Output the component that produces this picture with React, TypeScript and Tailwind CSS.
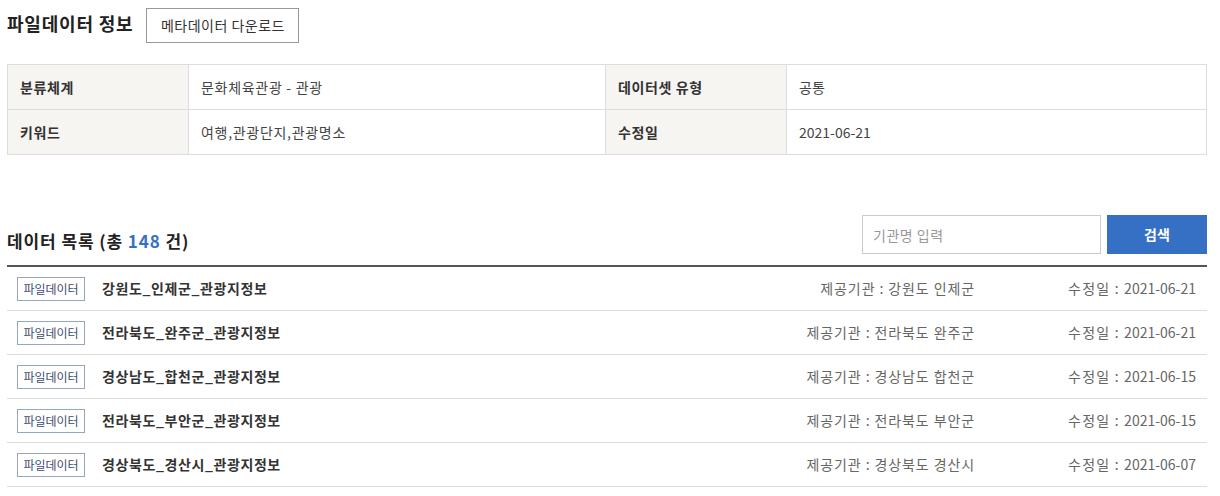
import { useState } from 'react';

const FONT = { fontFamily: '"Noto Sans CJK KR", "Noto Sans", sans-serif' };

const META = [
  [
    ['분류체계', '문화체육관광 - 관광'],
    ['데이터셋 유형', '공통'],
  ],
  [
    ['키워드', '여행,관광단지,관광명소'],
    ['수정일', '2021-06-21'],
  ],
];

const ROWS = [
  { title: '강원도_인제군_관광지정보', org: '강원도 인제군', date: '2021-06-21' },
  { title: '전라북도_완주군_관광지정보', org: '전라북도 완주군', date: '2021-06-21' },
  { title: '경상남도_합천군_관광지정보', org: '경상남도 합천군', date: '2021-06-15' },
  { title: '전라북도_부안군_관광지정보', org: '전라북도 부안군', date: '2021-06-15' },
  { title: '경상북도_경산시_관광지정보', org: '경상북도 경산시', date: '2021-06-07' },
];

export default function App() {
  const [query, setQuery] = useState('');

  return (
    <div className="w-[1220px] bg-white pl-[7px] pr-[13px] text-[#333]" style={FONT}>
      {/* file data info */}
      <div className="flex h-[50px] items-start pt-2">
        <h2 className="mt-[1px] text-[18px] font-bold leading-[28px] tracking-[0.8px] text-[#222]">파일데이터 정보</h2>
        <button className="ml-[13px] h-[35px] w-[153px] border border-[#999] bg-white text-[14px] tracking-[0.5px] text-[#333]">
          메타데이터 다운로드
        </button>
      </div>

      <div className="mt-[14px] border border-[#ddd] border-b-0">
        {META.map((row, i) => (
          <div key={i} className="flex h-[45px] border-b border-[#ddd] text-[14px]">
            {row.map(([label, value], j) => (
              <div key={label} className={j === 0 ? 'flex w-[598px]' : 'flex flex-1'}>
                <div className="flex w-[181px] items-center border-r border-[#ddd] bg-[#f6f5f1] pl-[12px] font-bold tracking-[0.6px] text-[#333]">
                  {label}
                </div>
                <div
                  className={
                    j === 0
                      ? 'flex flex-1 items-center border-r border-[#ddd] pl-[12px] tracking-[0.7px] text-[#444]'
                      : 'flex flex-1 items-center pl-[12px] text-[#444]'
                  }
                >
                  {value}
                </div>
              </div>
            ))}
          </div>
        ))}
      </div>

      {/* data list */}
      <div className="mt-[60px] flex items-end justify-between pb-[11px]">
        <h2 className="text-[17px] font-bold leading-[26px] tracking-[0.9px] text-[#222]">
          데이터 목록 (총 <span className="text-[#3570c0]">148</span> 건)
        </h2>
        <div className="flex gap-[6px]">
          <input
            value={query}
            onChange={(e) => setQuery(e.target.value)}
            placeholder="기관명 입력"
            className="h-[39px] w-[239px] border border-[#ccc] px-[10px] text-[14px] tracking-[0.5px] text-[#333] outline-none placeholder:text-[#999]"
          />
          <button className="h-[39px] w-[100px] bg-[#3670c5] text-[14px] font-bold text-white">검색</button>
        </div>
      </div>

      <div className="border-t-2 border-[#555]">
        {ROWS.map((r) => (
          <div key={r.title} className="flex h-[44px] items-center border-b border-[#ddd] pl-[10px] pr-[11px]">
            <span className="flex h-[24px] w-[68px] items-center justify-center border border-[#97a6c2] text-[12px] text-[#3e4d6e]">
              파일데이터
            </span>
            <span className="ml-[17px] text-[14px] font-bold tracking-[0.6px] text-[#333]">{r.title}</span>
            <span className="ml-auto text-[14px] tracking-[0.9px] text-[#666]">제공기관 : {r.org}</span>
            <span className="w-[221px] text-right text-[14px] text-[#666]">
              <span className="tracking-[1.2px]">수정일 : </span>
              {r.date}
            </span>
          </div>
        ))}
      </div>
    </div>
  );
}
